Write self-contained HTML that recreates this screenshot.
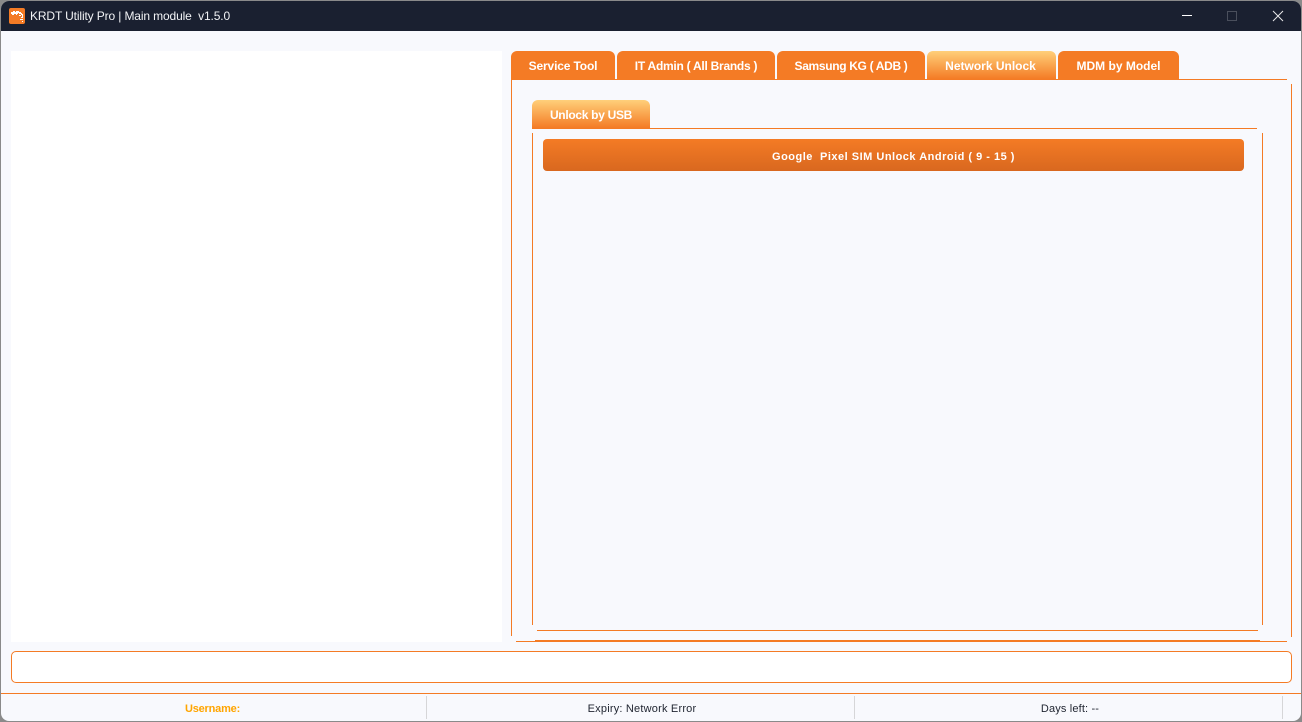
<!DOCTYPE html>
<html><head><meta charset="utf-8"><style>
html,body{margin:0;padding:0;background:#8a8a8a}
body{width:1302px;height:722px;position:relative;overflow:hidden;font-family:"Liberation Sans",sans-serif}
#w{position:absolute;left:1px;top:1px;width:1300px;height:720px;background:#f8f9fd;border-radius:8px;overflow:hidden}
div.a{position:absolute}
.o{position:absolute;background:#f47b25}
.t{position:absolute;white-space:nowrap;text-align:center;font-weight:bold;font-size:12px;color:#fff;line-height:30px;height:28px;border-radius:6px 6px 0 0;background:#f47b25}
.l{background:linear-gradient(#ffcf7a,#f47b25)}
.s{position:absolute;top:701px;font-size:11px;line-height:14px;color:#1f2430;white-space:nowrap;text-align:center}
</style></head><body><div id="w">
<div class="a" style="left:0;top:0;width:1300px;height:30px;background:#1a2030"></div>
<svg class="a" style="position:absolute;left:8px;top:7px" width="16" height="16" viewBox="0 0 16 16"><rect width="16" height="16" rx="2" fill="#f47b25"/><path d="M2 4h2v-1h2v1h1v-1h3v1h2v1h1v1h1v3h-1v-2h-1v-1h-2v-1h-1v1h-1v1h-1v-1h-2v1h-2v-1h-1z" fill="#fff"/><path d="M10 7h2v1h-2zM12 9h2v1h-2zM11 11h3v1h-3zM13 13h1v1h-1z" fill="#fff"/></svg>
<div class="a" style="left:29px;top:7px;color:#f2f3f5;font-size:12px;line-height:16px;white-space:pre;letter-spacing:-.13px">KRDT Utility Pro | Main module  v1.5.0</div>
<svg class="a" style="position:absolute;left:1170px;top:0" width="130" height="30" viewBox="0 0 130 30"><path d="M11 14.500h10" stroke="#fff" fill="none"/><rect x="56.500" y="10.500" width="9" height="9" stroke="#4a4f5c" fill="none"/><path d="M102 10l10 10M112 10l-10 10" stroke="#e8e8ea" fill="none"/></svg>

<div class="a" style="left:10px;top:50px;width:491px;height:591px;background:#fff"></div>

<div class="t" style="left:510px;top:50px;width:104px;letter-spacing:-.15px">Service Tool</div>
<div class="t" style="left:616px;top:50px;width:158px;letter-spacing:-.26px">IT Admin ( All Brands )</div>
<div class="t" style="left:776px;top:50px;width:148px;letter-spacing:-.33px">Samsung KG ( ADB )</div>
<div class="t l" style="left:926px;top:50px;width:127px;padding-right:2px">Network Unlock</div>
<div class="t" style="left:1057px;top:50px;width:121px">MDM by Model</div>

<div class="o" style="left:510px;top:78px;width:776px;height:1px"></div>
<div class="o" style="left:510px;top:79px;width:1px;height:556px"></div>
<div class="o" style="left:1290px;top:83px;width:1px;height:553px"></div>
<div class="o" style="left:515px;top:640px;width:771px;height:1px"></div>
<div class="o" style="left:534px;top:639px;width:725px;height:2px"></div>

<div class="t l" style="left:531px;top:99px;width:118px;letter-spacing:-.3px">Unlock by USB</div>
<div class="o" style="left:531px;top:127px;width:725px;height:1px"></div>
<div class="o" style="left:531px;top:132px;width:1px;height:492px"></div>
<div class="o" style="left:1261px;top:132px;width:1px;height:492px"></div>
<div class="o" style="left:536px;top:629px;width:721px;height:1px"></div>

<div class="a" style="left:542px;top:138px;width:701px;height:32px;border-radius:4px;background:linear-gradient(#f47b25,#d9681f);color:#fff;font-size:11px;font-weight:bold;line-height:37px;text-align:center;letter-spacing:.5px;white-space:pre">Google  Pixel SIM Unlock Android ( 9 - 15 )</div>

<div class="a" style="left:10px;top:650px;width:1279px;height:30px;background:#fff;border:1px solid #f47b25;border-radius:5px"></div>
<div class="o" style="left:0;top:692px;width:1300px;height:1px"></div>
<div class="s" style="left:0;width:423px;color:#ffa500;font-weight:bold;letter-spacing:-.2px">Username:</div>
<div class="s" style="left:426px;width:430px;letter-spacing:.2px">Expiry: Network Error</div>
<div class="s" style="left:854px;width:430px;letter-spacing:.15px">Days left: --</div>
<div class="a" style="left:425px;top:695px;width:1px;height:23px;background:#d6d6d8"></div>
<div class="a" style="left:853px;top:695px;width:1px;height:23px;background:#d6d6d8"></div>
<div class="a" style="left:1281px;top:695px;width:1px;height:23px;background:#d6d6d8"></div>
</div></body></html>
